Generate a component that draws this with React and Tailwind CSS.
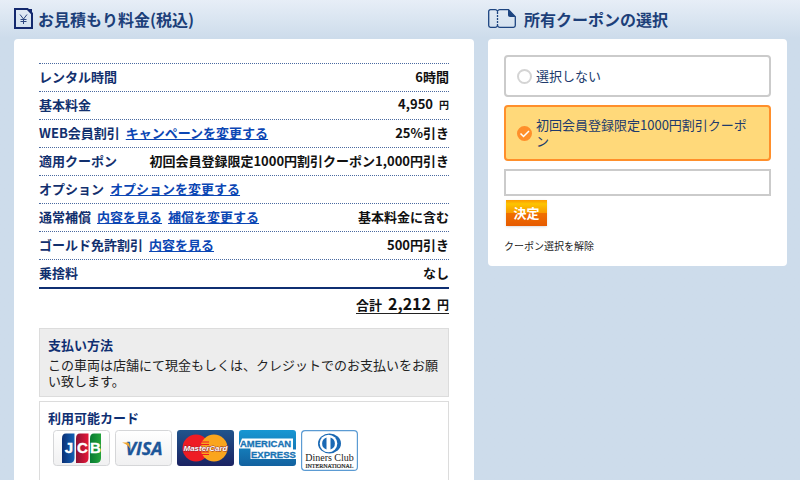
import { useState } from "react";

const linkClass = "ml-1.5 text-[#0b46b4] underline";

const rows = [
  { label: "レンタル時間", value: "6時間" },
  { label: "基本料金", value: "4,950", unit: "円" },
  { label: "WEB会員割引", links: ["キャンペーンを変更する"], value: "25%引き" },
  {
    label: "適用クーポン",
    value: "初回会員登録限定1000円割引クーポン1,000円引き",
  },
  { label: "オプション", links: ["オプションを変更する"], value: "" },
  {
    label: "通常補償",
    links: ["内容を見る", "補償を変更する"],
    value: "基本料金に含む",
  },
  { label: "ゴールド免許割引", links: ["内容を見る"], value: "500円引き" },
  { label: "乗捨料", value: "なし" },
];

const coupons = [
  { id: "none", name: "選択しない" },
  { id: "first", name: "初回会員登録限定1000円割引クーポン" },
];

const YenIcon = () => (
  <svg width="19" height="21" viewBox="0 0 19 21" fill="none" aria-hidden="true">
    <path d="M1 1h12.5L18 5.5V20H1z" stroke="#14296e" strokeWidth="2" />
    <path d="M12.5 1H18v6z" fill="#14296e" />
    <path
      d="M6 6.500l3.500 4.500L13 6.500M9.500 11v5M6.500 11.500h6M6.500 13.500h6"
      stroke="#2c4680"
      strokeWidth="1"
    />
  </svg>
);

const CouponIcon = () => (
  <svg width="28" height="19" viewBox="0 0 28 19" fill="none" aria-hidden="true">
    <path
      d="M9.500 2.200C9 1.300 8.300.7 7.200.7H2.500C1.400.7.7 1.400.7 2.500v14c0 1.100.7 1.800 1.800 1.800h4.700c1.100 0 1.800-.6 2.300-1.500.5.9 1.200 1.500 2.300 1.500h13.700c1.100 0 1.800-.7 1.800-1.800V7.800L20.500.7h-8.700c-1.100 0-1.800.6-2.300 1.500z"
      stroke="#1c4480"
      strokeWidth="1.3"
    />
    <path d="M9.500 3v14" stroke="#1c4480" strokeWidth="1.3" strokeDasharray="2 1" />
    <path d="M20 .3l7.600 7.700h-5.600c-1.200 0-2-.8-2-2z" fill="#1c4480" />
  </svg>
);

const JcbCard = () => (
  <svg width="57" height="36" viewBox="0 0 57 36" role="img" aria-label="JCB">
    <defs>
      <linearGradient id="paper" x1="0" y1="0" x2="0" y2="1">
        <stop offset="0" stopColor="#fff" />
        <stop offset="1" stopColor="#f0f0f1" />
      </linearGradient>
      <linearGradient id="jcbBlue">
        <stop offset="0" stopColor="#0a2f75" />
        <stop offset="1" stopColor="#1261b5" />
      </linearGradient>
      <linearGradient id="jcbRed">
        <stop offset="0" stopColor="#8c1233" />
        <stop offset="1" stopColor="#e71738" />
      </linearGradient>
      <linearGradient id="jcbGreen">
        <stop offset="0" stopColor="#087b32" />
        <stop offset="1" stopColor="#23a33b" />
      </linearGradient>
    </defs>
    <rect x=".5" y=".5" width="56" height="35" rx="3" fill="url(#paper)" stroke="#d5d6d8" />
    <path d="M13 3.500h8.500V28q0 5-5 5H9V8.500q0-5 4-5z" fill="url(#jcbBlue)" />
    <path d="M27 3.500h8.500V28q0 5-5 5H23V8.500q0-5 4-5z" fill="url(#jcbRed)" />
    <path d="M41 3.500h7V28q0 5-5 5h-6V8.500q0-5 4-5z" fill="url(#jcbGreen)" />
    <g
      fill="#fff"
      stroke="#fff"
      strokeWidth=".4"
      fontFamily="Liberation Sans, sans-serif"
      fontWeight="bold"
      fontSize="15"
      textAnchor="middle"
    >
      <text x="16" y="23">J</text>
      <text x="29.500" y="23">C</text>
      <text x="42.500" y="23">B</text>
    </g>
  </svg>
);

const VisaCard = () => (
  <svg width="57" height="36" viewBox="0 0 57 36" role="img" aria-label="VISA">
    <rect x=".5" y=".5" width="56" height="35" rx="3" fill="url(#paper)" stroke="#d5d6d8" />
    <text
      x="29"
      y="25"
      fill="#1d5699"
      stroke="#1d5699"
      strokeWidth=".3"
      fontFamily="Open Sans, sans-serif"
      fontWeight="bold"
      fontStyle="italic"
      fontSize="18"
      textAnchor="middle"
    >
      VISA
    </text>
    <path d="M7 12.500h5.500q1.500 0 1.800 1.500l1 5q-2-4.500-8.300-6.500z" fill="#f0a52e" />
  </svg>
);

const MasterCard = () => (
  <svg width="57" height="36" viewBox="0 0 57 36" role="img" aria-label="MasterCard">
    <defs>
      <linearGradient id="mcBg" x1="0" y1="0" x2="0" y2="1">
        <stop offset="0" stopColor="#20548c" />
        <stop offset="1" stopColor="#1b2362" />
      </linearGradient>
    </defs>
    <rect width="57" height="36" rx="3" fill="url(#mcBg)" />
    <circle cx="19" cy="18" r="13.500" fill="#ee1c24" />
    <circle cx="37" cy="18" r="13.500" fill="#faa51e" />
    <path
      d="M25 12h7M24 14.500h8M24 22h8M25 24.500h7"
      stroke="#ee1c24"
      strokeWidth="1.200"
    />
    <text
      x="28.500"
      y="21"
      fill="#fff"
      stroke="#8a2430"
      strokeWidth=".8"
      paintOrder="stroke"
      fontFamily="Liberation Sans, sans-serif"
      fontWeight="bold"
      fontStyle="italic"
      fontSize="8"
      textAnchor="middle"
    >
      MasterCard
    </text>
  </svg>
);

const AmexCard = () => (
  <svg width="57" height="36" viewBox="0 0 57 36" role="img" aria-label="American Express">
    <defs>
      <linearGradient id="amexBg" x1="0" y1="0" x2="0" y2="1">
        <stop offset="0" stopColor="#1897d3" />
        <stop offset="1" stopColor="#12619f" />
      </linearGradient>
    </defs>
    <rect width="57" height="36" rx="3" fill="url(#amexBg)" />
    <path d="M3 8.500h51v11h3v9.500H11.500V18.500H0V16z" fill="#fff" />
    <g
      fill="#1873b4"
      stroke="#1873b4"
      strokeWidth=".3"
      fontFamily="Liberation Sans, sans-serif"
      fontWeight="bold"
      fontSize="9.500"
    >
      <text x="1" y="17">AMERICAN</text>
      <text x="12" y="27.500">EXPRESS</text>
    </g>
  </svg>
);

const DinersCard = () => (
  <svg width="57" height="41" viewBox="0 0 57 41" role="img" aria-label="Diners Club International">
    <rect x=".6" y=".6" width="55.800" height="39.800" rx="3.500" fill="#fff" stroke="#5b9bd3" strokeWidth="1.200" />
    <ellipse cx="28.500" cy="13.500" rx="11.500" ry="10" fill="#1a69b4" />
    <circle cx="27.500" cy="13.500" r="8.800" fill="#fff" />
    <path d="M25.500 7.500v12a6.300 6.300 0 0 1 0-12zM29.500 7.500v12a6.300 6.300 0 0 0 0-12z" fill="#1a69b4" />
    <g fill="#222" fontFamily="Liberation Serif, serif" textAnchor="middle">
      <text x="28.500" y="31" fontSize="10">Diners Club</text>
      <text x="28.500" y="37.500" fontSize="6" stroke="#222" strokeWidth=".2">
        INTERNATIONAL
      </text>
    </g>
  </svg>
);

const EstimateTable = () => (
  <table className="block text-[13px] leading-4 font-bold">
    <tbody className="block border-b-2 border-[#0f2f72]">
      {rows.map((row) => (
        <tr
          key={row.label}
          className="flex h-7 items-center justify-between border-t border-dotted border-[#4a69a0] pb-0.5"
        >
          <th scope="row" className="text-left font-bold whitespace-nowrap text-[#12306e]">
            {row.label}
            {row.links?.map((link) => (
              <a key={link} href="#" className={linkClass}>
                {link}
              </a>
            ))}
          </th>
          <td className="text-right whitespace-nowrap text-[#111]">
            {row.value}
            {row.unit && <span className="ml-1.5 text-[10px]">{row.unit}</span>}
          </td>
        </tr>
      ))}
    </tbody>
  </table>
);

const CouponOption = ({ coupon, checked, onSelect }) => (
  <label
    className={
      checked
        ? "flex items-center gap-1 rounded border-2 border-[#ff8f2b] bg-[#ffd97a] py-2.5 pr-4 pl-[11px]"
        : "flex items-center gap-1 rounded border-2 border-[#cbcbcb] bg-white py-[11px] pr-4 pl-[11px]"
    }
  >
    <span className="relative flex shrink-0">
      <input
        type="radio"
        name="coupon"
        checked={checked}
        onChange={() => onSelect(coupon.id)}
        className="size-[15px] appearance-none rounded-full border-2 border-[#d4d4d4] bg-white checked:border-[#ff8f2b] checked:bg-[#ff8f2b]"
      />
      {checked && (
        <svg
          viewBox="0 0 15 15"
          className="pointer-events-none absolute inset-0 size-[15px]"
          fill="none"
          aria-hidden="true"
        >
          <path d="M3.500 7.500l3 3 5.500-5.500" stroke="#fff" strokeWidth="1.500" />
        </svg>
      )}
    </span>
    <span className="text-[13px] leading-4 text-[#203a6c]">{coupon.name}</span>
  </label>
);

const App = () => {
  const [selected, setSelected] = useState("first");
  const [code, setCode] = useState("");

  return (
    <div className="h-screen overflow-hidden bg-[#cddceb] bg-linear-to-b from-[#e7eef7] to-[#cddceb] to-[38px] pr-[13px] pl-3.5 font-['Noto_Sans_CJK_JP',sans-serif]">
      <main className="grid grid-cols-[20fr_13fr] items-start gap-3.5">
        <section>
          <h2 className="flex h-[39px] items-center gap-[5px] pb-0.5 text-base font-bold text-[#1c3f79]">
            <YenIcon />
            お見積もり料金(税込)
          </h2>
          <div className="rounded-t bg-white px-[25px] pt-6 pb-10">
            <EstimateTable />
            <p className="mt-1.5 flex justify-end">
              <span className="flex items-baseline border-b border-[#222] text-[13px] leading-4 font-bold text-[#111]">
                合計<span className="mx-1.5 text-base leading-4">2,212</span>
                <span className="text-xs leading-4">円</span>
              </span>
            </p>

            <div className="mt-3.5 border border-[#dcdcdc] bg-[#ededed] px-2 pt-1.5 pb-[7px]">
              <h3 className="text-[13px] leading-5 font-bold text-[#0f2f72]">支払い方法</h3>
              <p className="pt-0.5 text-[13px] leading-4 text-[#222]">
                この車両は店舗にて現金もしくは、クレジットでのお支払いをお願い致します。
              </p>
            </div>

            <div className="mt-1 border border-[#dcdcdc] px-2 pt-1.5 pb-10">
              <h3 className="text-[13px] leading-5 font-bold text-[#0f2f72]">利用可能カード</h3>
              <div className="mt-0.5 ml-[5px] flex items-start gap-[5px]">
                <JcbCard />
                <VisaCard />
                <MasterCard />
                <AmexCard />
                <DinersCard />
              </div>
            </div>
          </div>
        </section>

        <section>
          <h2 className="flex h-[39px] items-center gap-2 pb-0.5 text-base font-bold text-[#1c3f79]">
            <CouponIcon />
            所有クーポンの選択
          </h2>
          <form
            className="rounded bg-white p-4 pb-3"
            onSubmit={(e) => e.preventDefault()}
          >
            <div className="flex flex-col gap-2">
              {coupons.map((coupon) => (
                <CouponOption
                  key={coupon.id}
                  coupon={coupon}
                  checked={selected === coupon.id}
                  onSelect={setSelected}
                />
              ))}
              <input
                type="text"
                aria-label="クーポンコード"
                value={code}
                onChange={(e) => setCode(e.target.value)}
                className="h-[27px] w-full border-2 border-[#cbcbcb] bg-white px-2 text-[13px]"
              />
            </div>
            <button
              type="submit"
              className="mt-1 ml-0.5 block h-[26px] w-[41px] bg-[linear-gradient(#fb9a00,#fdc400_15%,#f99a00_50%,#f07000_50%,#e65a00)] text-[13px] leading-4 font-bold text-white shadow"
            >
              決定
            </button>
            <a href="#" className="mt-3 block text-[10px] leading-4 text-[#222]">
              クーポン選択を解除
            </a>
          </form>
        </section>
      </main>
    </div>
  );
};

export default App;
